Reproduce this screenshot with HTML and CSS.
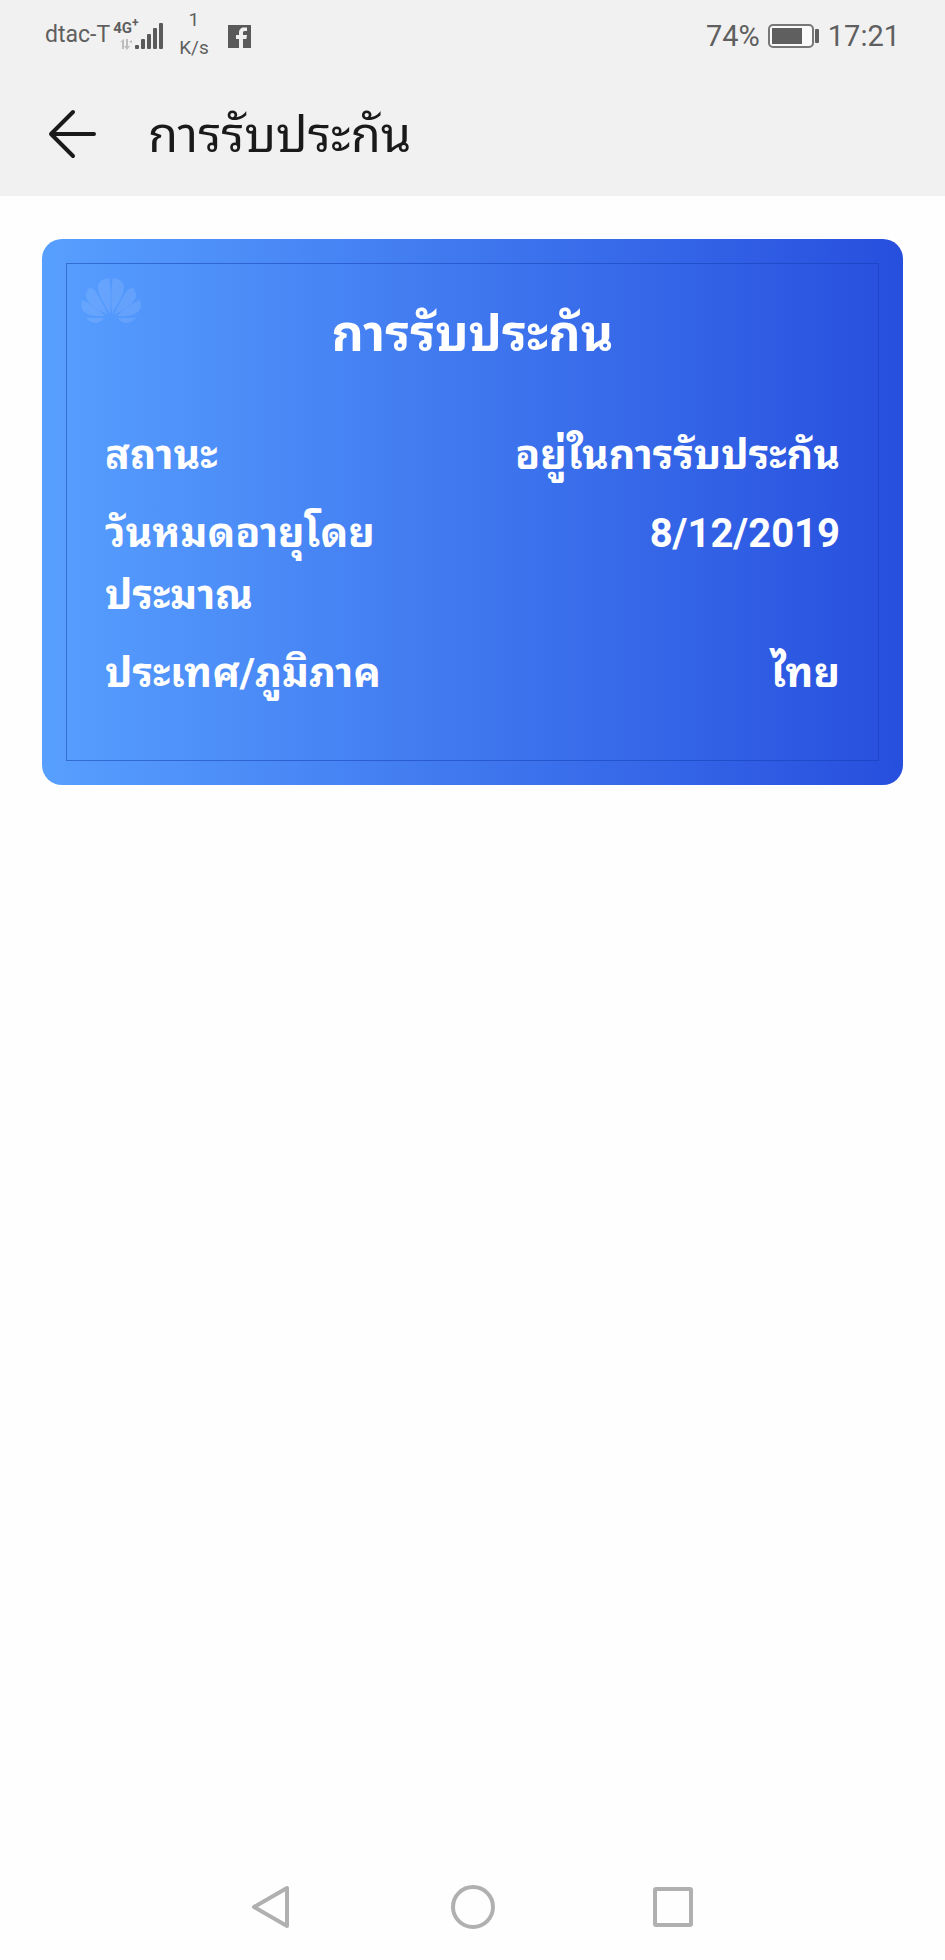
FILE: index.html
```html
<!DOCTYPE html>
<html lang="th">
<head>
<meta charset="utf-8">
<meta name="viewport" content="width=device-width, initial-scale=1">
<title>การรับประกัน</title>
<link rel="stylesheet" href="styles.css">
</head>
<body>
<header class="top">
  <div class="status">
    <div class="status-left">
      <span class="carrier">dtac-T</span>
      <div class="network">
        <span class="network-type">4G<sup class="plus">+</sup></span>
        <svg class="signal" width="44" height="28" viewBox="0 0 44 28" aria-hidden="true">
          <g fill="#bdbdbd"><path d="M0 20l4-3v10H2v-7zM6 17h2v7h2l-3 4-3-4h2zM9 20l3-2v3z"/></g>
          <g fill="#5a5a5a"><rect x="15" y="23" width="4" height="4" rx="1"/><rect x="21" y="17" width="4" height="10" rx="1"/><rect x="27" y="12" width="4" height="15" rx="1"/><rect x="33" y="6" width="4" height="21" rx="1"/><rect x="39" y="1" width="4" height="26" rx="1"/></g>
        </svg>
      </div>
      <div class="speed"><span>1</span><span>K/s</span></div>
      <svg class="facebook" width="23" height="23" viewBox="0 0 23 23" aria-hidden="true">
        <rect width="23" height="23" fill="#5a5a5a"/>
        <path d="M11 23v-9H8v-4h3V8c0-3.600 2-5.500 5-5.500h3V6h-2c-1.500 0-2 .6-2 2v2h4l-.6 4H15v9z" fill="#f1f1f1"/>
      </svg>
    </div>
    <div class="status-right">
      <span>74%</span>
      <svg class="battery" width="52" height="26" viewBox="0 0 52 26" aria-hidden="true">
        <rect x="1" y="2" width="44" height="22" rx="4" fill="#fafafa" stroke="#777" stroke-width="2"/>
        <rect x="4" y="5" width="30" height="16" fill="#5f5f5f"/>
        <rect x="47" y="6" width="4" height="14" rx="1" fill="#5f5f5f"/>
      </svg>
      <span>17:21</span>
    </div>
  </div>
  <div class="appbar">
    <button class="back" type="button" aria-label="กลับ">
      <svg width="48" height="50" viewBox="0 0 48 50" fill="none" stroke="#1a1a1a" stroke-width="4" stroke-linecap="round" stroke-linejoin="round"><path d="M46 25H3M25 3L3 25l22 22"/></svg>
    </button>
    <h1 class="title">การรับประกัน</h1>
  </div>
</header>
<main class="content">
  <section class="card">
    <div class="card-frame">
      <svg class="logo" width="60" height="46" viewBox="0 0 60 46" aria-hidden="true">
        <g id="petals" fill="#fff">
          <path d="M29 36C24 27 17 17 17 9c0-5 4-8 11-9 2 9 2 25 1 36z"/>
          <path d="M27 37C18 32 6 26 5 18c0-3 1-6 3-8 3 0 5 1 7 4 4 7 9 15 12 23z"/>
          <path d="M24 38C15 38 4 38 1 31c-1-3-1-6 0-9 9 4 17 10 23 16z"/>
          <path d="M23 40c-3 6-12 7-18 0z"/>
        </g>
        <use href="#petals" transform="matrix(-1 0 0 1 60 0)"/>
      </svg>
      <h2 class="card-title">การรับประกัน</h2>
      <dl class="details">
        <div class="row"><dt>สถานะ</dt><dd>อยู่ในการรับประกัน</dd></div>
        <div class="row"><dt>วันหมดอายุโดย<wbr>ประมาณ</dt><dd><time class="date" datetime="2019-12-08">8/12/2019</time></dd></div>
        <div class="row"><dt>ประเทศ/ภูมิภาค</dt><dd>ไทย</dd></div>
      </dl>
    </div>
  </section>
</main>
<nav class="navbar">
  <button type="button" aria-label="ย้อนกลับ"><svg width="44" height="44" viewBox="0 0 44 44"><path d="M36 3v38L3 22z" stroke-linejoin="round"/></svg></button>
  <button type="button" aria-label="หน้าหลัก"><svg width="44" height="44" viewBox="0 0 44 44"><circle cx="22" cy="22" r="20"/></svg></button>
  <button type="button" aria-label="แอปล่าสุด"><svg width="44" height="44" viewBox="0 0 44 44"><rect x="4" y="4" width="36" height="36" rx="1"/></svg></button>
</nav>
</body>
</html>
```
FILE: styles.css
```css
* {
  box-sizing: border-box;
}

body {
  margin: 0;
  min-height: 100vh;
  display: flex;
  flex-direction: column;
  background: #fefefe;
  font-family: Roboto, "Noto Sans Thai Looped", "Noto Looped Thai", "Droid Sans Thai", Loma, "Noto Sans Thai", "Noto Sans", sans-serif;
}

h1, h2, dl, dd {
  margin: 0;
}

button {
  padding: 0;
  border: 0;
  background: none;
}

svg {
  display: block;
}

.top {
  background: #f1f1f1;
}

.status {
  display: flex;
  justify-content: space-between;
  height: 72px;
  padding: 0 45px;
  color: #5f5f5f;
}

.status-left,
.status-right {
  display: flex;
  align-items: center;
}

.carrier {
  padding-bottom: 2px;
  font-size: 23px;
  line-height: 68px;
}

.network {
  display: flex;
  flex-direction: column;
  align-items: flex-end;
  width: 54px;
}

.network-type {
  align-self: flex-start;
  height: 0;
  padding-left: 3px;
  font-size: 15px;
  font-weight: 700;
  line-height: 12px;
}

.plus {
  font-size: 12px;
  line-height: 0;
}

.speed {
  display: flex;
  flex-direction: column;
  align-items: center;
  margin-left: 15px;
  padding-bottom: 4px;
  font-size: 19px;
  line-height: 28px;
}

.facebook {
  margin-left: 19px;
}

.status-right {
  gap: 8px;
  font-size: 29px;
}

.appbar {
  display: flex;
  align-items: center;
  gap: 52px;
  height: 124px;
  padding: 0 48px;
}

.title {
  padding-top: 4px;
  color: #1a1a1a;
  font-size: 49px;
  font-weight: 400;
  line-height: 60px;
}

.content {
  flex: 1;
  padding: 43px 42px;
}

.card {
  padding: 24px;
  border-radius: 20px;
  background: linear-gradient(90deg, #579fff, #274fde);
}

.card-frame {
  position: relative;
  padding: 32px 38px 56px;
  border: 1px solid #0f3cb080;
  color: #fff;
}

.logo {
  position: absolute;
  top: 14px;
  left: 14px;
  opacity: 0.1;
}

.card-title {
  font-size: 50px;
  line-height: 76px;
  text-align: center;
}

.details {
  display: flex;
  flex-direction: column;
  gap: 16px;
  margin-top: 52px;
  font-size: 41px;
  font-weight: 700;
  line-height: 62px;
}

.row {
  display: flex;
  justify-content: space-between;
}

.row dt {
  max-width: 50%;
}

.row dd {
  text-align: right;
}

.date {
  font-size: 40px;
}

.navbar {
  display: flex;
  justify-content: center;
  gap: 156px;
  padding: 0 0 31px;
}

.navbar svg {
  fill: none;
  stroke: #b0b0b0;
  stroke-width: 4;
}
```
